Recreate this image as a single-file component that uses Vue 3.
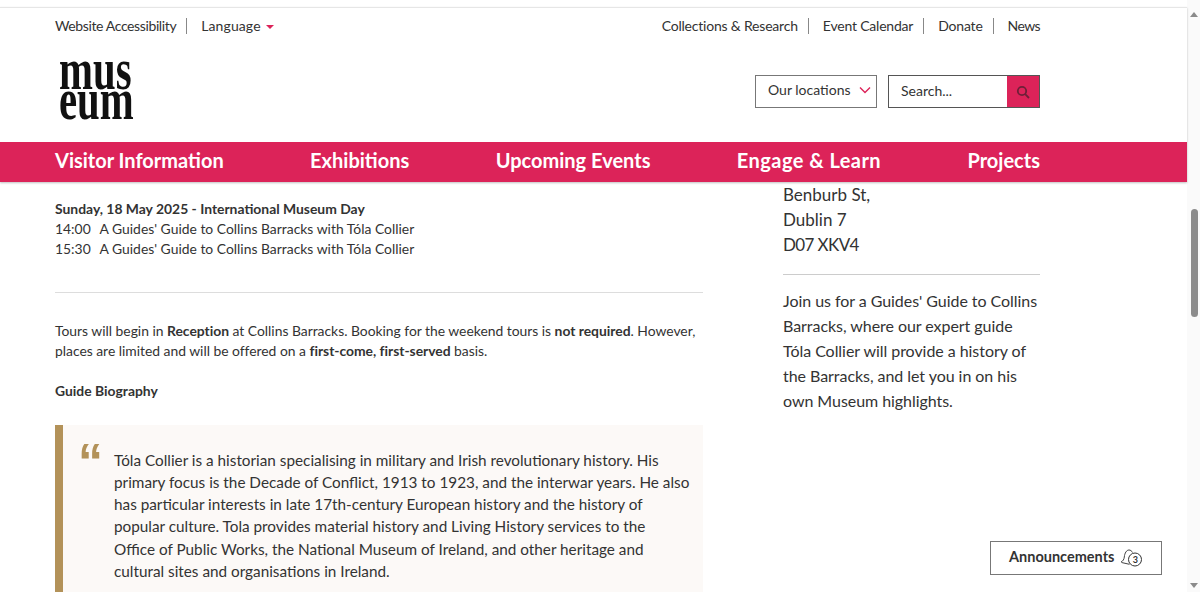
<script setup>
const topRight = ["Collections & Research", "Event Calendar", "Donate", "News"];
const navItems = ["Visitor Information", "Exhibitions", "Upcoming Events", "Engage & Learn", "Projects"];
const tours = [
  { time: "14:00", title: "A Guides' Guide to Collins Barracks with Tóla Collier" },
  { time: "15:30", title: "A Guides' Guide to Collins Barracks with Tóla Collier" },
];
</script>

<template>
  <div class="page">
    <div class="viewport">
      <header class="site-header">
        <div class="top-links">
          <div class="link-group left">
            <a class="top-link access">Website Accessibility</a>
            <a class="top-link">Language <span class="caret"></span></a>
          </div>
          <div class="link-group right">
            <a v-for="item in topRight" :key="item" class="top-link">{{ item }}</a>
          </div>
        </div>
        <div class="brand-row">
          <div class="logo">
            <span>mus</span>
            <span>eum</span>
          </div>
          <div class="tools">
            <div class="locations">
              Our locations
              <svg width="12" height="8" viewBox="0 0 12 8" fill="none">
                <path d="M1 1.500l5 5 5-5" stroke="#dc2359" stroke-width="1.400" />
              </svg>
            </div>
            <div class="search">
              <span class="search-text">Search...</span>
              <span class="search-btn">
                <svg width="14" height="14" viewBox="0 0 14 14" fill="none">
                  <circle cx="6" cy="6" r="4.200" stroke="#6e2038" stroke-width="1.800" />
                  <path d="M9.200 9.200L13 13" stroke="#6e2038" stroke-width="1.800" />
                </svg>
              </span>
            </div>
          </div>
        </div>
        <nav class="main-nav">
          <a v-for="item in navItems" :key="item">{{ item }}</a>
        </nav>
      </header>

      <main class="content">
        <section class="article">
          <p class="event-day">Sunday, 18 May 2025 - International Museum Day</p>
          <p v-for="tour in tours" :key="tour.time" class="tour">
            <span class="tour-time">{{ tour.time }}</span>{{ tour.title }}
          </p>
          <hr class="rule" />
          <p class="intro">
            Tours will begin in <b>Reception</b> at Collins Barracks. Booking for the weekend tours is
            <b>not required</b>. However, places are limited and will be offered on a
            <b>first-come, first-served</b> basis.
          </p>
          <p class="bio-title">Guide Biography</p>
          <blockquote class="quote">
            <span class="quote-mark">“</span>
            <p>
              Tóla Collier is a historian specialising in military and Irish revolutionary history. His<br />
              primary focus is the Decade of Conflict, 1913 to 1923, and the interwar years. He also<br />
              has particular interests in late 17th-century European history and the history of<br />
              popular culture. Tola provides material history and Living History services to the<br />
              Office of Public Works, the National Museum of Ireland, and other heritage and<br />
              cultural sites and organisations in Ireland.
            </p>
          </blockquote>
        </section>

        <aside class="sidebar">
          <p class="address">Benburb St,<br />Dublin 7<br /><span class="postcode">D07 XKV4</span></p>
          <hr class="side-rule" />
          <p class="side-text">
            Join us for a Guides' Guide to Collins Barracks, where our expert guide Tóla Collier
            will provide a history of the Barracks, and let you in on his own Museum highlights.
          </p>
        </aside>
      </main>

      <button class="announce">
        Announcements
        <span class="bell">
          <svg width="24" height="20" viewBox="0 0 24 20" fill="none">
            <path d="M1 14c2-1 3-2.500 3.300-5C4.700 5 6.500 2 9 2c1.500 0 2.800 1 3.500 2.500M1.500 14.500l8 1.800" stroke="#444" />
            <circle cx="15" cy="11.500" r="6.500" fill="#fff" stroke="#333" />
          </svg>
          <span class="bell-count">3</span>
        </span>
      </button>
    </div>

    <div class="scrollbar">
      <span class="arrow up"></span>
      <div class="track"><span class="thumb"></span></div>
      <span class="arrow down"></span>
    </div>
  </div>
</template>

<style>
html,
body {
  margin: 0;
  overflow: hidden;
}
</style>

<style scoped>
.page {
  display: flex;
  height: 592px;
  overflow: hidden;
  background: #fff;
  color: #333;
  font-family: "Lato", "Open Sans", sans-serif;
}
.viewport {
  position: relative;
  flex: 1;
  min-width: 0;
}
.site-header {
  margin-top: 7px;
  border-top: 1px solid #e6e6e6;
  box-shadow: 0 1px 2px rgba(0, 0, 0, 0.25);
}
.top-links {
  display: flex;
  justify-content: space-between;
  box-sizing: border-box;
  width: 985px;
  height: 26px;
  margin-left: 55px;
  padding-top: 10px;
  font-size: 14px;
  line-height: 16px;
}
.link-group {
  display: flex;
}
.top-link {
  border-right: 1px solid #888;
  white-space: nowrap;
}
.left .access {
  padding-right: 10px;
  letter-spacing: -0.38px;
}
.left .top-link:last-child {
  padding-left: 14px;
  letter-spacing: 0.1px;
}
.right .top-link {
  padding: 0 10px 0 14px;
  letter-spacing: -0.2px;
}
.right .top-link:last-child {
  letter-spacing: -0.6px;
}
.top-link:first-child {
  padding-left: 0 !important;
}
.top-link:last-child {
  padding-right: 0 !important;
  border-right: 0;
}
.caret {
  display: inline-block;
  width: 0;
  height: 0;
  margin-left: 2px;
  vertical-align: 2px;
  border-left: 4px solid transparent;
  border-right: 4px solid transparent;
  border-top: 4px solid #dc2359;
}
.brand-row {
  display: flex;
  justify-content: space-between;
  align-items: flex-start;
  width: 985px;
  height: 108px;
  margin-left: 55px;
}
.logo {
  display: flex;
  flex-direction: column;
  width: 76px;
  margin: 20px 0 0 4px;
  color: #111;
  font-family: "Liberation Serif", serif;
  font-size: 60px;
  font-weight: 700;
  line-height: 30px;
  transform: scaleX(0.68);
  transform-origin: left top;
}
.logo span {
  height: 30px;
}
.tools {
  display: flex;
  gap: 11px;
  margin-top: 41px;
}
.locations {
  display: flex;
  align-items: center;
  gap: 8px;
  box-sizing: border-box;
  width: 122px;
  height: 33px;
  padding: 0 0 4px 12px;
  border: 1px solid #777;
  font-size: 14px;
  white-space: nowrap;
}
.search {
  display: flex;
  box-sizing: border-box;
  width: 152px;
  height: 33px;
  border: 1px solid #555;
  font-size: 14px;
}
.search-text {
  flex: 1;
  padding-left: 12px;
  line-height: 29px;
}
.search-btn {
  display: flex;
  align-items: center;
  justify-content: center;
  width: 32px;
  background: #dc2359;
}
.main-nav {
  display: flex;
  justify-content: space-between;
  box-sizing: border-box;
  height: 40px;
  padding: 0 147px 0 55px;
  background: #dc2359;
  color: #fff;
  font-size: 20px;
  font-weight: 700;
  line-height: 37px;
}
.main-nav a:nth-child(4) {
  letter-spacing: 0.45px;
}
.content {
  display: grid;
  grid-template-columns: 648px 257px;
  gap: 80px;
  padding-left: 55px;
}
.content p {
  margin: 0;
}
.article {
  padding-top: 17px;
  font-size: 13.9px;
  line-height: 20px;
}
.event-day {
  font-weight: 700;
}
.tour-time {
  display: inline-block;
  width: 44.500px;
}
.rule {
  height: 1px;
  margin: 33px 0 28px;
  border: 0;
  background: #ddd;
}
.article .intro {
  margin-bottom: 20px;
  letter-spacing: -0.02px;
}
.article .bio-title {
  margin-bottom: 23.500px;
  font-weight: 700;
}
.quote {
  position: relative;
  box-sizing: border-box;
  height: 200px;
  margin: 0;
  padding: 24px 10px 0 51px;
  border-left: 8px solid #b39259;
  background: #fcf9f7;
  font-size: 15.300px;
  line-height: 22.300px;
}
.quote-mark {
  position: absolute;
  left: 15px;
  top: 12px;
  color: #b39259;
  font-family: "Liberation Sans", sans-serif;
  font-size: 50px;
  font-weight: 700;
  line-height: 50px;
}
.sidebar {
  font-size: 17px;
  line-height: 25px;
}
.postcode {
  letter-spacing: -0.6px;
}
.side-rule {
  height: 1px;
  margin: 17px 0 13px;
  border: 0;
  background: #ccc;
}
.sidebar .side-text {
  font-size: 16px;
  letter-spacing: -0.05px;
}
.announce {
  position: absolute;
  left: 990px;
  top: 541px;
  display: flex;
  align-items: center;
  gap: 6px;
  box-sizing: border-box;
  width: 172px;
  height: 34px;
  padding: 0 0 3px 18px;
  border: 1px solid #777;
  background: #fff;
  color: #333;
  font-family: inherit;
  font-size: 14.500px;
  font-weight: 700;
}
.bell {
  position: relative;
  display: flex;
  margin-top: 3px;
}
.bell-count {
  position: absolute;
  left: 11.500px;
  top: 4.500px;
  width: 7px;
  font-size: 9px;
  line-height: 14px;
  text-align: center;
}
.scrollbar {
  display: flex;
  flex-direction: column;
  align-items: center;
  width: 13px;
  background: #fafafa;
}
.arrow {
  width: 0;
  height: 0;
  margin-top: 12px;
  border-left: 4px solid transparent;
  border-right: 4px solid transparent;
}
.arrow.up {
  border-bottom: 5px solid #8a8a8a;
}
.arrow.down {
  margin: 0 0 4px;
  border-top: 5px solid #8a8a8a;
}
.track {
  flex: 1;
  box-sizing: border-box;
  width: 100%;
  padding-top: 192px;
}
.thumb {
  display: block;
  width: 7px;
  height: 108px;
  margin-left: 4px;
  border-radius: 4px;
  background: #8c8c8c;
}
</style>
